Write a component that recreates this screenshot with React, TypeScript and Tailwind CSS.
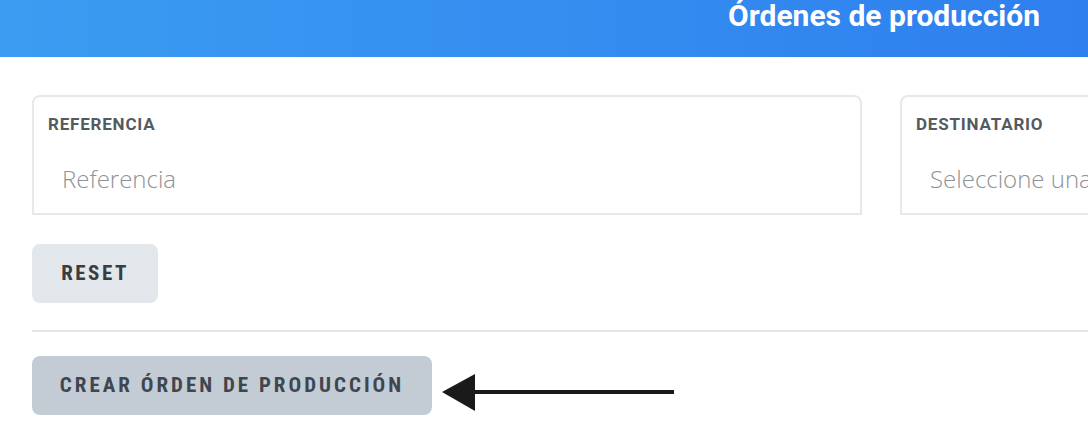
import React from 'react';

function Field({ label, placeholder }: { label: string; placeholder: string }) {
  return (
    <div className="w-[830px] h-[120px] shrink-0 rounded-t-[8px] border-2 border-[#e5e8ec] bg-white px-[14px] pt-[16px]">
      <div className="font-['Roboto',sans-serif] text-[17px] font-bold leading-[22px] tracking-[0.8px] text-[#555a60]">{label}</div>
      <div className="mt-[29px] pl-[14px] font-['Open_Sans',sans-serif] text-[24px] font-light leading-[30px] text-[#8e9296] whitespace-nowrap">
        {placeholder}
      </div>
    </div>
  );
}

export default function App() {
  return (
    <div className="w-[1088px] h-[438px] overflow-hidden bg-white">
      <header className="h-[57px] bg-gradient-to-r from-[#3b9cf1] to-[#2f7fee] flex justify-end pr-[48px]">
        <h1 className="font-['Roboto',sans-serif] text-[30px] font-bold leading-[34px] -mt-[1px] text-white whitespace-nowrap">
          Órdenes de producción
        </h1>
      </header>

      <div className="pl-[32px] pt-[38px]">
        <div className="flex gap-[38px]">
          <Field label="REFERENCIA" placeholder="Referencia" />
          <Field label="DESTINATARIO" placeholder="Seleccione una opción" />
        </div>

        <button className="mt-[29px] h-[59px] w-[126px] rounded-[8px] bg-[#e2e7ec] font-['Roboto',sans-serif] [font-stretch:87.5%] text-[21px] font-bold tracking-[2.5px] text-[#3a3d40]">
          RESET
        </button>

        <div className="mt-[27px] h-[2px] bg-[#e3e6ea]" />

        <div className="mt-[24px] flex items-start">
          <button className="h-[59px] w-[400px] rounded-[8px] bg-[#c3ccd5] font-['Roboto',sans-serif] [font-stretch:87.5%] text-[21px] font-bold tracking-[3px] text-[#3e4650]">
            CREAR ÓRDEN DE PRODUCCIÓN
          </button>
          <svg width="234" height="40" viewBox="0 0 234 40" className="ml-[10px] mt-[17px]">
            <line x1="30" y1="19" x2="232" y2="19" stroke="#1a1a1a" strokeWidth="4" />
            <polygon points="0,19 33,1 33,38" fill="#1a1a1a" />
          </svg>
        </div>
      </div>
    </div>
  );
}
